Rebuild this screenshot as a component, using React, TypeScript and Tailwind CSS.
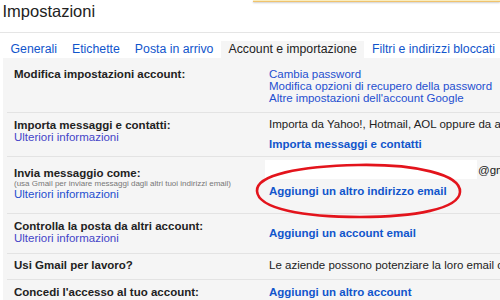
const Tab: React.FC<{ label: string; active?: boolean }> = ({ label, active }) => (
  <div
    className={`px-[7.5px] h-[17px] leading-[17px] text-[12.3px] whitespace-nowrap ${
      active ? "bg-[#f5f5f5] text-[#222]" : "text-[#1155cc]"
    }`}
  >
    {label}
  </div>
);

const Row: React.FC<{
  className: string;
  labelPad: string;
  rightPad: string;
  label: React.ReactNode;
  children: React.ReactNode;
  last?: boolean;
}> = ({ className, labelPad, rightPad, label, children, last }) => (
  <div className={`flex ml-[4px] ${last ? "" : "border-b border-[#e3e3e3]"} ${className}`}>
    <div className={`w-[262px] shrink-0 pl-[7px] ${labelPad}`}>{label}</div>
    <div className={`flex-1 whitespace-nowrap ${rightPad}`}>{children}</div>
  </div>
);

const Label: React.FC<{ children: React.ReactNode }> = ({ children }) => (
  <div className="font-bold text-[11.5px] leading-[12px] text-[#222]">{children}</div>
);

const More: React.FC<{ purple?: boolean }> = ({ purple }) => (
  <div className={`text-[11.5px] leading-[12px] ${purple ? "text-[#4444c8]" : "text-[#1f4fd0]"}`}>
    Ulteriori informazioni
  </div>
);

const Action: React.FC<{ children: React.ReactNode; className?: string }> = ({ children, className }) => (
  <div className={`font-bold text-[11.5px] leading-[12px] text-[#1155cc] ${className ?? ""}`}>{children}</div>
);

export default function App() {
  return (
    <div className="relative w-[500px] h-[300px] overflow-hidden bg-white text-[#222] font-['Liberation_Sans',Arial,sans-serif]">
      {/* bottom edge of the notification box */}
      <div className="absolute top-0 left-[253px] right-0 h-[2px] bg-[#f9edbe] border-b border-[#f0c36d] shadow-[0_1px_2px_rgba(0,0,0,0.2)]"></div>

      <div className="h-[33px] border-b border-[#e5e5e5] pl-[2.5px] pt-[1px]">
        <h1 className="text-[16.5px] leading-[20px] text-[#222]">Impostazioni</h1>
      </div>

      <div className="flex pl-[3px] pt-[8px]">
        <Tab label="Generali" />
        <Tab label="Etichette" />
        <Tab label="Posta in arrivo" />
        <Tab label="Account e importazione" active />
        <Tab label="Filtri e indirizzi bloccati" />
        <Tab label="Inoltro e POP/IMAP" />
      </div>

      <div className="ml-[3px] bg-[#f5f5f5] h-[242px]">
        <Row
          className="h-[55px]"
          labelPad="pt-[10px]"
          rightPad="pt-[10px]"
          label={<Label>Modifica impostazioni account:</Label>}
        >
          <div className="text-[11.5px] leading-[12.2px] text-[#1f4fd0]">
            <div>Cambia password</div>
            <div>Modifica opzioni di recupero della password</div>
            <div>Altre impostazioni dell'account Google</div>
          </div>
        </Row>

        <Row
          className="h-[44px]"
          labelPad="pt-[6px]"
          rightPad="pt-[4.5px]"
          label={
            <>
              <Label>Importa messaggi e contatti:</Label>
              <More purple />
            </>
          }
        >
          <div className="text-[11.5px] leading-[12px] text-[#222]">
            Importa da Yahoo!, Hotmail, AOL oppure da altri account webmail o POP3.
          </div>
          <Action className="mt-[8px]">Importa messaggi e contatti</Action>
        </Row>

        <Row
          className="h-[57px]"
          labelPad="pt-[10px]"
          rightPad="pt-[3px]"
          label={
            <>
              <Label>Invia messaggio come:</Label>
              <div className="text-[8px] leading-[9px] text-[#777]">
                (usa Gmail per inviare messaggi dagli altri tuoi indirizzi email)
              </div>
              <More />
            </>
          }
        >
          <div className="flex items-center -ml-[4px]">
            <div className="w-[212px] h-[19px] bg-white shrink-0"></div>
            <span className="ml-[1px] text-[11.5px] leading-[12px] text-[#222]">@gmail.com</span>
          </div>
          <Action className="mt-[6px]">Aggiungi un altro indirizzo email</Action>
        </Row>

        <Row
          className="h-[40px]"
          labelPad="pt-[6px]"
          rightPad="pt-[13px]"
          label={
            <>
              <Label>Controlla la posta da altri account:</Label>
              <More purple />
            </>
          }
        >
          <Action>Aggiungi un account email</Action>
        </Row>

        <Row
          className="h-[26px]"
          labelPad="pt-[5px]"
          rightPad="pt-[5px]"
          label={<Label>Usi Gmail per lavoro?</Label>}
        >
          <div className="text-[11.5px] leading-[12px] text-[#222]">
            Le aziende possono potenziare la loro email con G Suite.
          </div>
        </Row>

        <Row
          className="h-[40px]"
          labelPad="pt-[6px]"
          rightPad="pt-[6px]"
          label={<Label>Concedi l'accesso al tuo account:</Label>}
          last
        >
          <Action>Aggiungi un altro account</Action>
        </Row>
      </div>

      {/* hand drawn red circle */}
      <svg
        className="absolute left-[254px] top-[162px]"
        width="210"
        height="58"
        viewBox="0 0 210 58"
        fill="none"
      >
        <path
          d="M104 3 C160 2 207 12 206 30 C205 47 160 55 106 55 C50 55 4 47 3 29 C2 13 46 4 104 3 Z"
          stroke="#e3141c"
          strokeWidth="2.6"
        />
      </svg>
    </div>
  );
}
